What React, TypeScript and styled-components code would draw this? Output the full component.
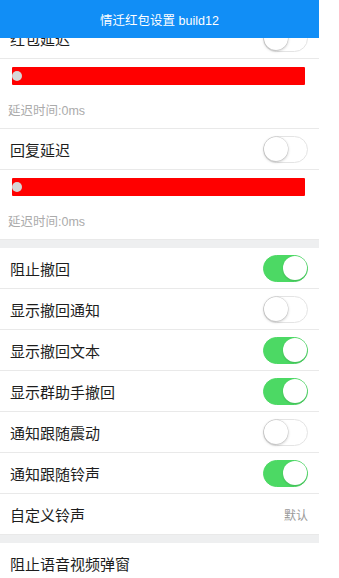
import React, { useLayoutEffect, useRef } from "react";
import styled, { createGlobalStyle } from "styled-components";

const Global = createGlobalStyle`
  html, body { margin: 0; padding: 0; background: #ffffff; }
  body { font-family: "Liberation Sans", "Noto Sans CJK SC", sans-serif; }
  * { box-sizing: border-box; }
`;

const Screen = styled.div`
  width: 319px;
  height: 578px;
  display: flex;
  flex-direction: column;
  background: #ffffff;
  overflow: hidden;
`;

const Header = styled.header`
  flex: 0 0 38px;
  height: 38px;
  background: #118ef6;
  color: #ffffff;
  display: flex;
  align-items: center;
  justify-content: center;
  font-size: 12.5px;
  position: relative;
  z-index: 2;
`;

const Viewport = styled.div`
  flex: 1;
  overflow: hidden;
`;

const List = styled.div`
  display: flex;
  flex-direction: column;
`;

const Row = styled.div`
  height: 41px;
  flex: 0 0 41px;
  display: flex;
  align-items: center;
  justify-content: space-between;
  padding: 0 11px 0 10px;
  border-bottom: 1px solid #e9e9e9;
`;

const Label = styled.span`
  font-size: 15px;
  color: #1d1d1d;
`;

const Value = styled.span`
  font-size: 12px;
  color: #9a9a9a;
`;

const SliderBlock = styled.div`
  display: flex;
  flex-direction: column;
  padding-top: 8px;
  padding-bottom: 5px;
  border-bottom: 1px solid #e9e9e9;
  height: 70px;
`;

const Track = styled.div`
  position: relative;
  height: 18px;
  margin: 0 14px 0 12px;
  background: #ff0000;
  border-radius: 1px;
`;

const Thumb = styled.span`
  position: absolute;
  left: 0;
  top: 4px;
  width: 10px;
  height: 10px;
  border-radius: 50%;
  background: #d6d6d6;
`;

const Caption = styled.div`
  margin-top: 15px;
  padding: 0 8px;
  height: 22px;
  line-height: 22px;
  font-size: 12.5px;
  color: #ababab;
`;

const Gap = styled.div`
  height: 8px;
  flex: 0 0 8px;
  background: #eeeff0;
`;

const SwitchBox = styled.span<{ $on: boolean }>`
  position: relative;
  width: 45px;
  height: 27px;
  border-radius: 14px;
  background: ${(p) => (p.$on ? "#4cd964" : "#ffffff")};
  border: 1.5px solid ${(p) => (p.$on ? "#4cd964" : "#e4e4e4")};
  display: flex;
  align-items: center;
  justify-content: ${(p) => (p.$on ? "flex-end" : "flex-start")};
`;

const Knob = styled.span<{ $on: boolean }>`
  width: 24px;
  height: 24px;
  border-radius: 50%;
  background: #ffffff;
  box-shadow: ${(p) =>
    p.$on
      ? "0 1px 2px rgba(0,0,0,0.15)"
      : "0 1px 3px rgba(0,0,0,0.25), 0 0 0 0.5px rgba(0,0,0,0.12)"};
`;

const Switch = ({ on }: { on: boolean }) => (
  <SwitchBox $on={on}>
    <Knob $on={on} />
  </SwitchBox>
);

const Slider = () => (
  <SliderBlock>
    <Track>
      <Thumb />
    </Track>
    <Caption>延迟时间:0ms</Caption>
  </SliderBlock>
);

type Item =
  | { kind: "switch"; label: string; on: boolean }
  | { kind: "value"; label: string; value: string }
  | { kind: "plain"; label: string };

const group: Item[] = [
  { kind: "switch", label: "阻止撤回", on: true },
  { kind: "switch", label: "显示撤回通知", on: false },
  { kind: "switch", label: "显示撤回文本", on: true },
  { kind: "switch", label: "显示群助手撤回", on: true },
  { kind: "switch", label: "通知跟随震动", on: false },
  { kind: "switch", label: "通知跟随铃声", on: true },
  { kind: "value", label: "自定义铃声", value: "默认" },
];

const renderItem = (item: Item) => (
  <Row key={item.label}>
    <Label>{item.label}</Label>
    {item.kind === "switch" && <Switch on={item.on} />}
    {item.kind === "value" && <Value>{item.value}</Value>}
  </Row>
);

export default function App() {
  const ref = useRef<HTMLDivElement>(null);
  useLayoutEffect(() => {
    if (ref.current) ref.current.scrollTop = 20;
  }, []);
  return (
    <>
      <Global />
      <Screen>
        <Header>情迁红包设置 build12</Header>
        <Viewport ref={ref}>
          <List>
            {renderItem({ kind: "switch", label: "红包延迟", on: false })}
            <Slider />
            {renderItem({ kind: "switch", label: "回复延迟", on: false })}
            <Slider />
            <Gap />
            {group.map(renderItem)}
            <Gap />
            {renderItem({ kind: "plain", label: "阻止语音视频弹窗" })}
            {renderItem({ kind: "switch", label: "阻止视频通话", on: false })}
          </List>
        </Viewport>
      </Screen>
    </>
  );
}
